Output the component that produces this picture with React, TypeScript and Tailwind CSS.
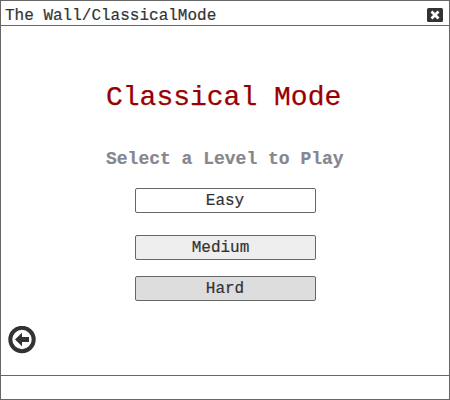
const levels = [
  { name: "Easy", style: "bg-white mb-[22px]" },
  { name: "Medium", style: "bg-[#eeeeee] mb-4 pr-[9px]" },
  { name: "Hard", style: "bg-[#dddddd]" },
];

export default function App() {
  return (
    <div className="flex h-[400px] w-[450px] flex-col border border-[#666] bg-white font-['Liberation_Mono',monospace] text-[#333] [-webkit-text-stroke:0.2px]">
      <header className="flex h-[25px] shrink-0 items-center justify-between border-b border-[#666] pr-[6px] pl-1">
        <h1 className="pt-[6px] text-[16px] leading-5">The Wall/ClassicalMode</h1>
        <button aria-label="Close" className="mt-1">
          <svg width="16" height="14" viewBox="0 0 16 14">
            <rect width="16" height="14" rx="1.5" fill="#333" />
            <path d="M4.5 3.5l7 7M11.5 3.5l-7 7" stroke="#fff" strokeWidth="2.8" />
          </svg>
        </button>
      </header>
      <main className="flex flex-1 flex-col items-center">
        <h2 className="mt-[54px] w-[238px] text-[28px] leading-9 whitespace-nowrap text-[#990000] [-webkit-text-stroke:0.25px]">Classical Mode</h2>
        <p className="mt-[31px] w-[238px] text-[18px] leading-6 font-bold whitespace-nowrap text-[#868690]">Select a Level to Play</p>
        <div className="mt-[17px] flex w-[181px] flex-col">
          {levels.map((l) => (
            <button key={l.name} className={`h-[25px] rounded-[2px] border border-[#666] text-[16px] leading-5 ${l.style}`}>{l.name}</button>
          ))}
        </div>
      </main>
      <div className="mb-[21px] ml-[7px] flex">
        <button aria-label="Back">
          <svg width="28" height="28" viewBox="0 0 28 28">
            <circle cx="14" cy="13.5" r="11.7" fill="none" stroke="#333" strokeWidth="4" />
            <path d="M7 13.5l7-6.7v4.3h7v5h-7v4.2z" fill="#333" />
          </svg>
        </button>
      </div>
      <footer className="h-6 shrink-0 border-t border-[#666]" />
    </div>
  );
}
